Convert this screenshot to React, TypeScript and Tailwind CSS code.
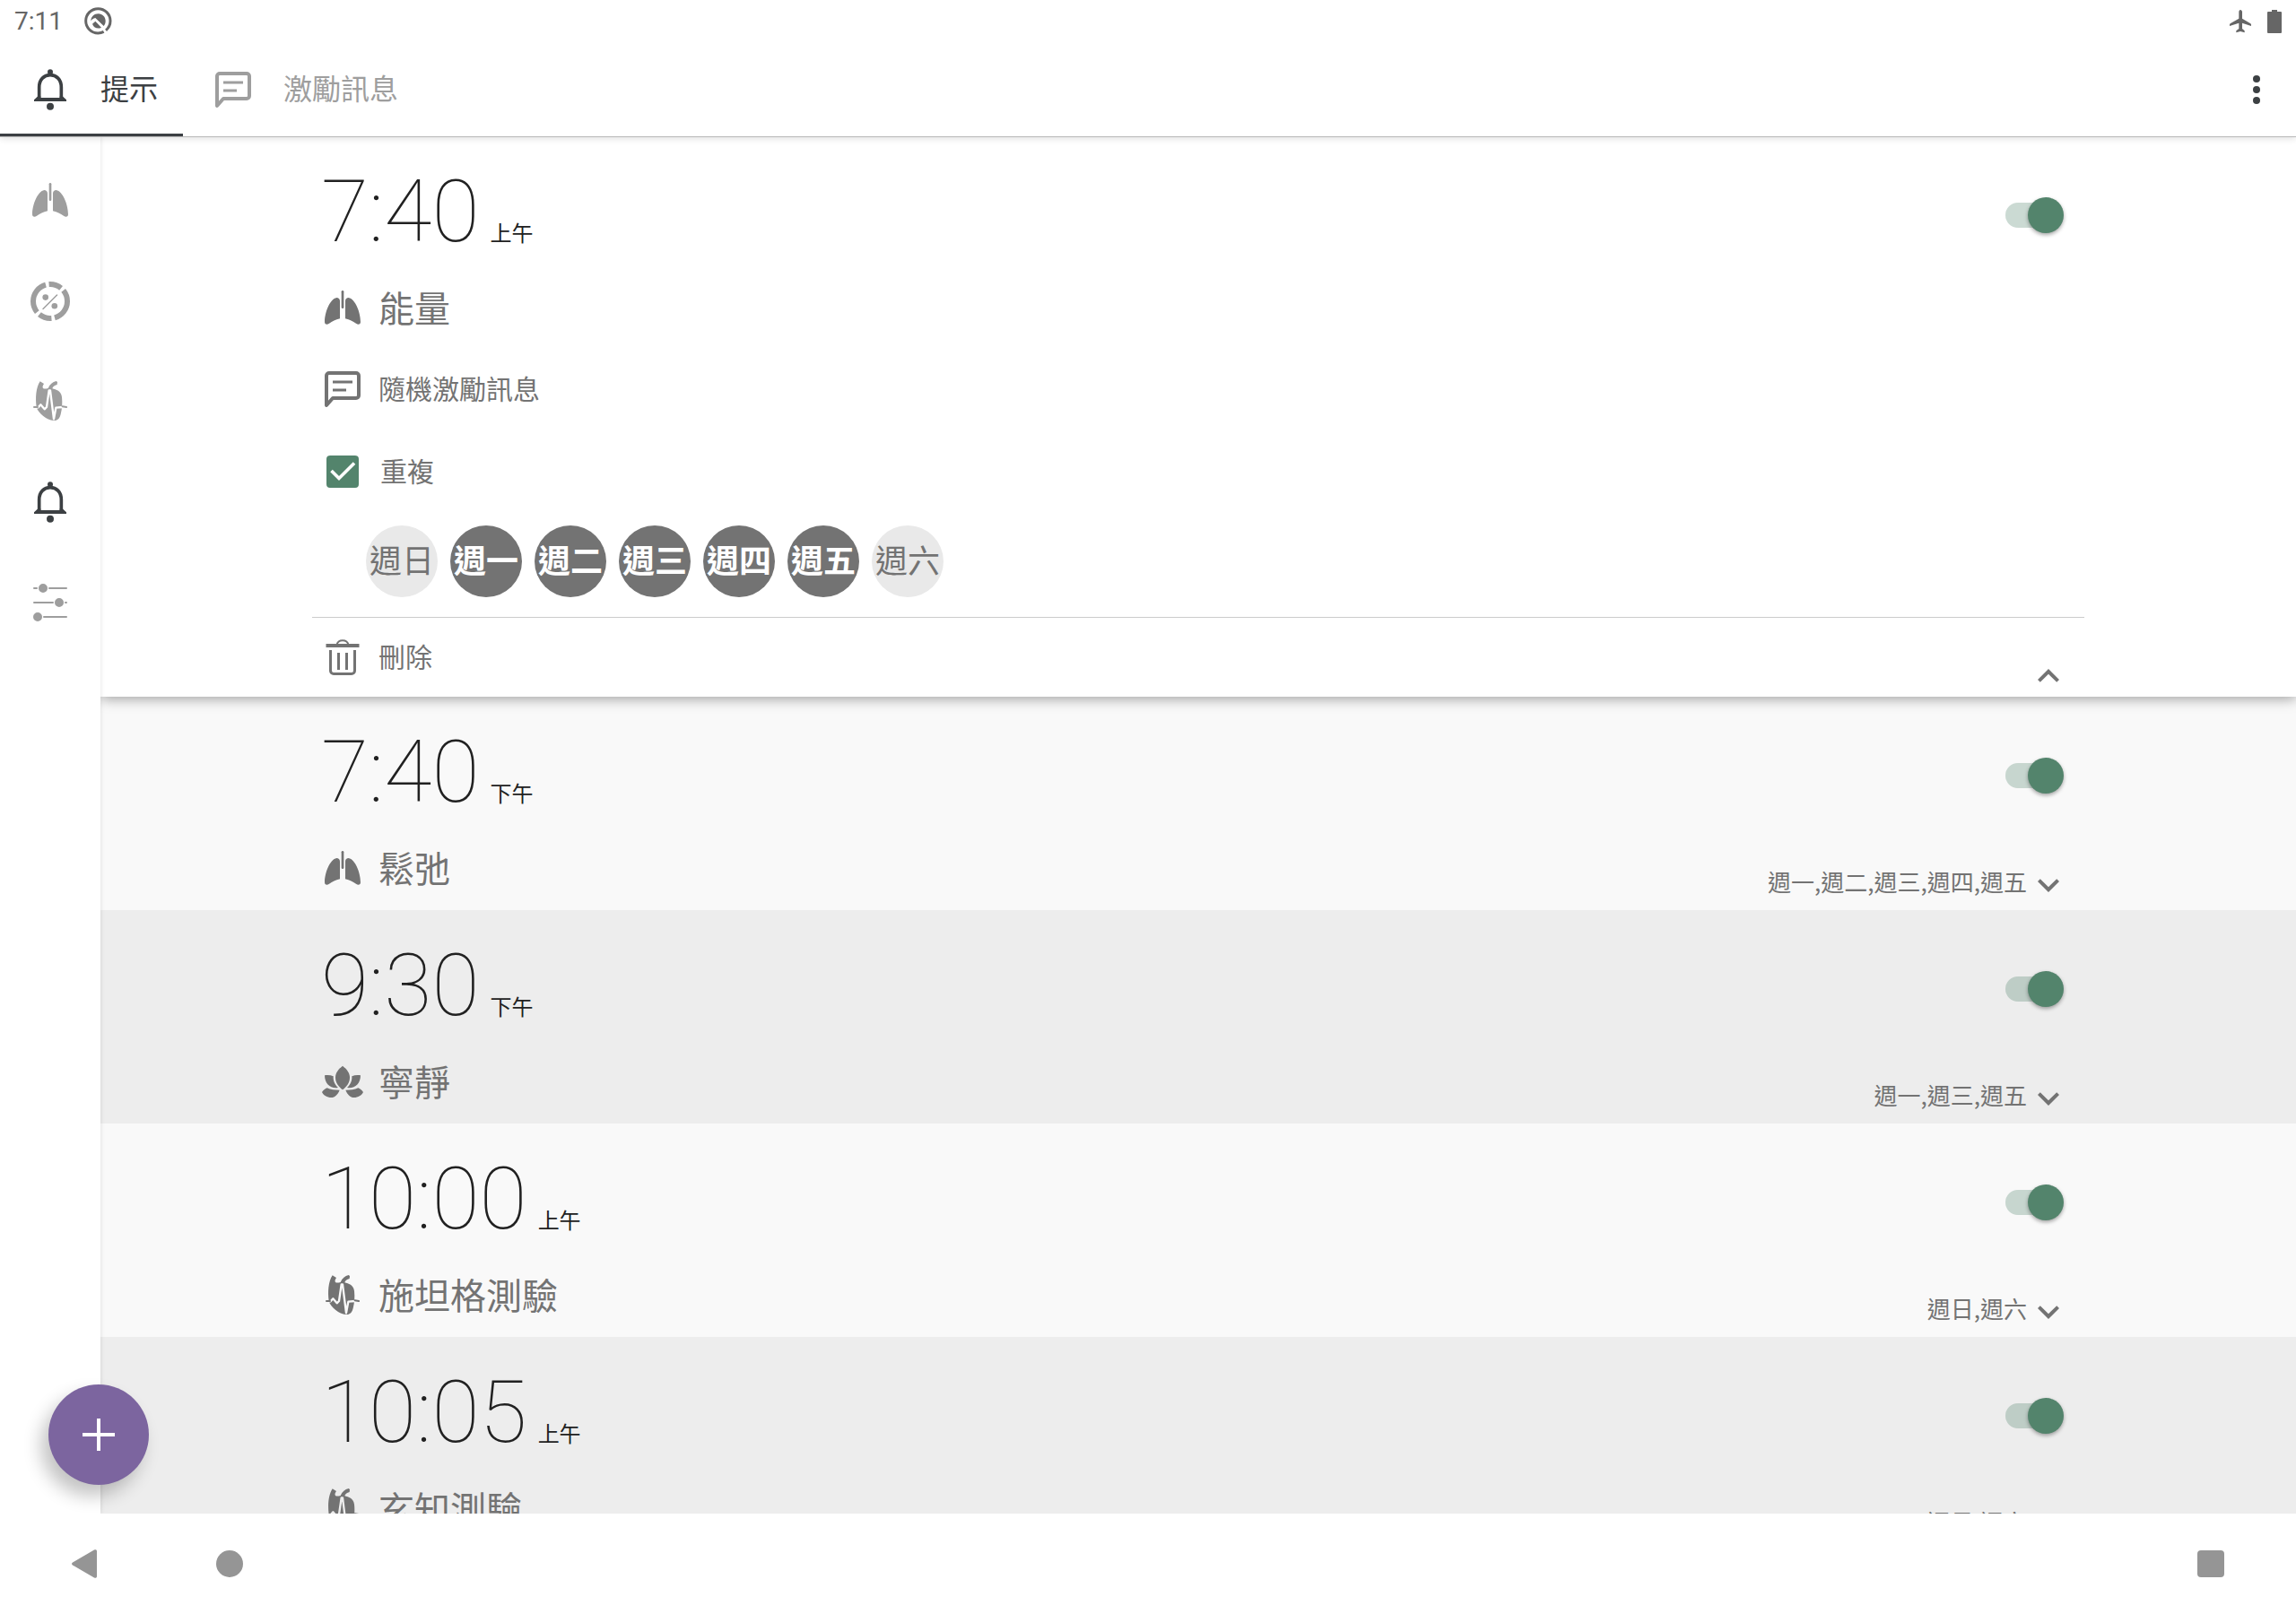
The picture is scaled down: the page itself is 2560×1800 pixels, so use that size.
import { useState } from "react";
import type { ReactNode } from "react";
import { clsx } from "clsx";

type IconName = "lungs" | "wheel" | "heart" | "bell" | "sliders" | "message" | "lotus" | "trash";

interface Reminder {
  id: number;
  time: string;
  period: string;
  icon: IconName;
  label: string;
  days: string[];
}

const WEEK = ["週日", "週一", "週二", "週三", "週四", "週五", "週六"];

const REMINDERS: Reminder[] = [
  { id: 1, time: "7:40", period: "上午", icon: "lungs", label: "能量", days: ["週一", "週二", "週三", "週四", "週五"] },
  { id: 2, time: "7:40", period: "下午", icon: "lungs", label: "鬆弛", days: ["週一", "週二", "週三", "週四", "週五"] },
  { id: 3, time: "9:30", period: "下午", icon: "lotus", label: "寧靜", days: ["週一", "週三", "週五"] },
  { id: 4, time: "10:00", period: "上午", icon: "heart", label: "施坦格測驗", days: ["週日", "週六"] },
  { id: 5, time: "10:05", period: "上午", icon: "heart", label: "玄知測驗", days: ["週日", "週六"] },
];

const NAV: { icon: IconName; label: string }[] = [
  { icon: "lungs", label: "呼吸" },
  { icon: "wheel", label: "進度" },
  { icon: "heart", label: "健康測驗" },
  { icon: "bell", label: "提示" },
  { icon: "sliders", label: "設定" },
];

const ICONS: Record<IconName, { box: number; body: ReactNode }> = {
  lungs: {
    box: 144,
    body: (
      <g fill="currentColor">
        <rect x="68" y="12" width="8" height="60" rx="4" />
        <path d="M52 36C58 36 63 40 63 47V106C48 109 38 115 27 122C20 127 12 126 12 117C12 85 30 40 52 36Z" />
        <path d="M92 36C86 36 81 40 81 47V106C96 109 106 115 117 122C124 127 132 126 132 117C132 85 114 40 92 36Z" />
      </g>
    ),
  },
  wheel: {
    box: 48,
    body: (
      <g fill="none" stroke="currentColor">
        <circle cx="24" cy="24" r="19" strokeWidth="6" pathLength="360" strokeDasharray="44 11 114 11" strokeDashoffset="-85.5" />
        <path d="M16 32.5L31.5 17" strokeWidth="1.5" strokeLinecap="round" />
        <circle cx="18.7" cy="19.6" r="3.3" fill="currentColor" stroke="none" />
        <circle cx="28.8" cy="29.2" r="3.3" fill="currentColor" stroke="none" />
      </g>
    ),
  },
  heart: {
    box: 144,
    body: (
      <>
        <mask id="pulse" maskUnits="userSpaceOnUse" x="0" y="0" width="144" height="144">
          <rect width="144" height="144" fill="#fff" />
          <path d="M20 92L32 91L40 82L53 97L60 90L68 34L72 34L84 130L91 92L114 90" fill="none" stroke="#000" strokeWidth="7" strokeLinejoin="round" />
        </mask>
        <path
          mask="url(#pulse)"
          fill="currentColor"
          d="M38 4L51 12C46 20 45 24 49 28C54 30 60 28 65 27C70 14 80 6 92 3L96 6L95 15C86 17 80 22 79 28C92 31 108 36 111 56C113 76 112 94 107 114C103 130 95 136 82 135C62 133 32 112 26 90C22 60 24 25 38 4Z"
        />
        <path d="M18 90H30M113 88L126 90" fill="none" stroke="currentColor" strokeWidth="6" strokeLinecap="round" />
      </>
    ),
  },
  bell: {
    box: 144,
    body: (
      <g fill="currentColor">
        <circle cx="72" cy="13" r="9" />
        <path d="M35 100V64C35 37 52 23 72 23C92 23 109 37 109 64V100" fill="none" stroke="currentColor" strokeWidth="11" />
        <path d="M18 106L31 94H40V99H104V94H113L126 106V111H18Z" />
        <circle cx="72" cy="128" r="12" />
      </g>
    ),
  },
  sliders: {
    box: 48,
    body: (
      <g fill="currentColor" stroke="currentColor" strokeWidth="2" strokeLinecap="round">
        <path d="M6 8H9M23 8H42M6 24H27M41 24H42M17 40H42" />
        <circle cx="16" cy="8" r="4" />
        <circle cx="34" cy="24" r="4" />
        <circle cx="10" cy="40" r="4" />
      </g>
    ),
  },
  message: {
    box: 24,
    body: (
      <g fill="none" stroke="currentColor">
        <path d="M3 21V4.5A1.5 1.5 0 0 1 4.5 3H19.5A1.5 1.5 0 0 1 21 4.5V15.5A1.5 1.5 0 0 1 19.5 17H6.5Z" strokeWidth="2" strokeLinejoin="round" />
        <path d="M6.5 8H17.5M6.5 12.5H14" strokeWidth="1.4" />
      </g>
    ),
  },
  lotus: {
    box: 144,
    body: (
      <g fill="currentColor">
        <path d="M72 17C86 28 96 40 96 56C96 74 84 88 72 97C60 88 48 74 48 56C48 40 58 28 72 17Z" />
        <path d="M12 49C22 47 32 48 41 52C40 68 46 80 57 90C32 94 12 78 12 49Z" />
        <path d="M132 49C122 47 112 48 103 52C104 68 98 80 87 90C112 94 132 78 132 49Z" />
        <path d="M3 105C8 98 14 93 20 91C32 97 46 98 62 98C56 113 46 123 34 123C20 123 8 116 3 105Z" />
        <path d="M141 105C136 98 130 93 124 91C112 97 98 98 82 98C88 113 98 123 110 123C124 123 136 116 141 105Z" />
      </g>
    ),
  },
  trash: {
    box: 48,
    body: (
      <g fill="none" stroke="currentColor">
        <path d="M5.5 11H42.5" strokeWidth="4" />
        <path d="M17.5 10C19 3.5 29 3.5 30.5 10" strokeWidth="2" />
        <path d="M10.5 16V39A3.5 3.5 0 0 0 14 42.5H34A3.5 3.5 0 0 0 37.5 39V16" strokeWidth="3" />
        <path d="M19.5 19V38M28.5 19V38" strokeWidth="3" />
      </g>
    ),
  },
};

function Icon({ name }: { name: IconName }) {
  const { box, body } = ICONS[name];
  return (
    <svg viewBox={`0 0 ${box} ${box}`} className="size-12 shrink-0" aria-hidden="true">
      {body}
    </svg>
  );
}

function Chevron({ up = false }: { up?: boolean }) {
  return (
    <svg viewBox="0 0 24 24" className="size-12" fill="currentColor" aria-hidden="true">
      <path d={up ? "M12 8.5l-6 6 1.41 1.41L12 11.33l4.59 4.58L18 14.5z" : "M16.59 8.59L12 13.17 7.41 8.59 6 10l6 6 6-6z"} />
    </svg>
  );
}

function StatusBar() {
  return (
    <div className="flex h-12 shrink-0 items-center justify-between px-4 text-[#666]">
      <div className="flex items-center gap-6">
        <span className="text-[28px] leading-8">7:11</span>
        <svg viewBox="0 0 96 96" className="size-8" aria-hidden="true">
          <circle cx="46" cy="46" r="41" fill="none" stroke="currentColor" strokeWidth="9" pathLength="360" strokeDasharray="348 12" strokeDashoffset="-62" />
          <g fill="currentColor">
            <path d="M22 46C22 32 33 22 47 22C61 22 71 33 71 46C71 53 69 59 65 63L37 36C30 37 25 41 22 46Z" />
            <path d="M27 56L37 47L57 68C46 74 32 70 27 56Z" />
          </g>
        </svg>
      </div>
      <div className="flex items-center gap-[18px]">
        <svg viewBox="0 0 72 78" className="h-[26px] w-6" fill="currentColor" aria-hidden="true">
          <path d="M36 0C39 0 42 3 42 7V29L70 46C72 48 73 50 72 54L42 44V63L50 70V76L36 72L22 76V70L31 63V44L0 54C-1 50 0 48 2 46L31 29V7C31 3 33 0 36 0Z" />
        </svg>
        <svg viewBox="0 0 16 26" className="h-[26px] w-4" fill="currentColor" aria-hidden="true">
          <path d="M5 0H11V2H15A1 1 0 0 1 16 3V25A1 1 0 0 1 15 26H1A1 1 0 0 1 0 25V3A1 1 0 0 1 1 2H5Z" />
        </svg>
      </div>
    </div>
  );
}

function Tab({ icon, active = false, children }: { icon: IconName; active?: boolean; children: ReactNode }) {
  return (
    <button
      role="tab"
      aria-selected={active}
      className={clsx(
        "flex items-center gap-8 pl-8 pr-7 text-[32px] leading-10",
        active ? "text-[#3c4043] shadow-[inset_0_-3px_0_#3c4043]" : "text-[#9e9e9e]"
      )}
    >
      <Icon name={icon} />
      {children}
    </button>
  );
}

function Header() {
  return (
    <header className="relative z-20 flex h-[152px] shrink-0 flex-col bg-white shadow-[0_1px_0_#b9b9b9,0_2px_8px_rgba(0,0,0,0.14)]">
      <StatusBar />
      <div className="flex grow justify-between">
        <div role="tablist" className="flex">
          <Tab icon="bell" active>
            提示
          </Tab>
          <Tab icon="message">激勵訊息</Tab>
        </div>
        <button aria-label="更多選項" className="px-5 text-[#3c4043]">
          <svg viewBox="0 0 48 48" className="size-12" fill="currentColor" aria-hidden="true">
            <circle cx="24" cy="12" r="4" />
            <circle cx="24" cy="24" r="4" />
            <circle cx="24" cy="36" r="4" />
          </svg>
        </button>
      </div>
    </header>
  );
}

function SideNav() {
  return (
    <nav className="z-10 flex w-28 shrink-0 flex-col bg-white pt-4 shadow-[0_0_5px_rgba(0,0,0,0.12)]">
      {NAV.map(({ icon, label }) => (
        <a
          key={icon}
          href={`#${icon}`}
          aria-label={label}
          className={clsx("flex h-28 items-center justify-center", icon === "bell" ? "text-[#3c4043]" : "text-[#9e9e9e]")}
        >
          <Icon name={icon} />
        </a>
      ))}
    </nav>
  );
}

function Switch({ label }: { label: string }) {
  return (
    <input
      type="checkbox"
      role="switch"
      defaultChecked
      aria-label={label}
      className="relative h-10 w-[65px] appearance-none before:absolute before:left-0 before:top-1.5 before:h-7 before:w-[58px] before:rounded-full before:bg-[#9e9e9e]/30 before:content-[''] after:absolute after:left-0 after:top-0 after:size-10 after:rounded-full after:bg-gray-100 after:shadow-[0_2px_4px_rgba(0,0,0,0.35)] after:content-[''] checked:before:bg-[#53846c]/30 checked:after:left-[25px] checked:after:bg-[#53846c]"
    />
  );
}

function DayPicker({ initial }: { initial: string[] }) {
  const [selected, setSelected] = useState(initial);

  const toggle = (day: string) =>
    setSelected((prev) => (prev.includes(day) ? prev.filter((d) => d !== day) : [...prev, day]));

  return (
    <div className="flex gap-3.5 pb-[22px] pl-[60px] pt-3.5">
      {WEEK.map((day) => {
        const on = selected.includes(day);
        return (
          <button
            key={day}
            aria-pressed={on}
            onClick={() => toggle(day)}
            className={clsx(
              "flex size-20 items-center justify-center rounded-full pt-0.5 text-4xl",
              on ? "bg-[#737373] font-bold text-white" : "bg-[#e9e9e9]"
            )}
          >
            {day}
          </button>
        );
      })}
    </div>
  );
}

function ReminderRow({ item, open, onToggle }: { item: Reminder; open: boolean; onToggle: () => void }) {
  return (
    <li
      className={clsx(
        "text-[#737373]",
        open ? "relative bg-white shadow-[0_2px_14px_rgba(0,0,0,0.38)]" : "min-h-[238px] odd:bg-[#ededed] even:bg-[#f9f9f9]"
      )}
    >
      <div className="mx-auto max-w-[1976px] pt-7">
        <div className="flex h-[120px] justify-between pl-2.5 pr-[23px] text-[#212121]">
          <div className="flex items-baseline gap-3">
            <span className="text-[97px] font-thin leading-[112px]">{item.time}</span>
            <span className="text-2xl">{item.period}</span>
          </div>
          <div className="flex items-center">
            <Switch label={`${item.time} ${item.period}`} />
          </div>
        </div>
        <div className="flex h-[88px] justify-between pl-2.5 pr-4">
          <div className="flex items-center gap-4 text-[40px]">
            <Icon name={item.icon} />
            <span className="pt-[3px]">{item.label}</span>
          </div>
          {!open && (
            <button
              onClick={onToggle}
              aria-expanded={false}
              className="flex items-end pb-0.5 font-['Noto_Sans_CJK_TC',sans-serif] text-[26px] leading-[56px]"
            >
              {item.days.join(",")}
              <Chevron />
            </button>
          )}
        </div>
        {open && (
          <>
            <button className="flex h-[92px] items-center gap-4 pl-2.5 text-[30px]">
              <Icon name="message" />
              隨機激勵訊息
            </button>
            <label className="flex h-[92px] items-center gap-[18px] pl-2.5 text-[30px]">
              <span className="relative flex size-12 items-center justify-center">
                <input
                  type="checkbox"
                  defaultChecked
                  className="peer size-9 appearance-none rounded border-4 border-[#737373] checked:border-[#53846c] checked:bg-[#53846c]"
                />
                <svg viewBox="0 0 48 48" className="pointer-events-none absolute inset-0 opacity-0 peer-checked:opacity-100" aria-hidden="true">
                  <path d="M11.5 23L20 31.5L37 14.5" fill="none" stroke="#fff" strokeWidth="3.6" />
                </svg>
              </span>
              重複
            </label>
            <DayPicker initial={item.days} />
            <div className="flex h-[89px] justify-between border-t border-[#ccc] pl-2.5 pr-4">
              <button className="flex items-center gap-4 text-[30px]">
                <Icon name="trash" />
                刪除
              </button>
              <button onClick={onToggle} aria-expanded aria-label="收合" className="self-end">
                <Chevron up />
              </button>
            </div>
          </>
        )}
      </div>
    </li>
  );
}

function SystemNav() {
  return (
    <div className="relative z-20 flex h-28 shrink-0 items-center justify-between bg-white px-20 text-[#959595]">
      <div className="flex items-center gap-[133px]">
        <button aria-label="返回">
          <svg viewBox="0 0 28 32" className="h-8 w-7" fill="currentColor" aria-hidden="true">
            <path d="M25 0.5C26.5-0.3 28 0.3 28 2V30C28 31.7 26.5 32.3 25 31.5L1 17.5C-0.3 16.7-0.3 15.3 1 14.5Z" />
          </svg>
        </button>
        <button aria-label="主畫面" className="size-[30px] rounded-full bg-[#959595]" />
      </div>
      <button aria-label="最近使用" className="size-[30px] rounded bg-[#959595]" />
    </div>
  );
}

export default function App() {
  const [openId, setOpenId] = useState<number | null>(1);

  return (
    <div className="flex h-screen flex-col overflow-hidden bg-white font-['Roboto','Noto_Sans_CJK_TC',sans-serif]">
      <Header />
      <div className="relative flex min-h-0 grow">
        <SideNav />
        <main className="grow overflow-y-auto [scrollbar-width:none]">
          <ul>
            {REMINDERS.map((item) => (
              <ReminderRow
                key={item.id}
                item={item}
                open={item.id === openId}
                onToggle={() => setOpenId(item.id === openId ? null : item.id)}
              />
            ))}
          </ul>
        </main>
        <button
          aria-label="新增提示"
          className="absolute bottom-8 left-[54px] z-20 flex size-28 items-center justify-center rounded-full bg-[#7c659f] shadow-[-8px_12px_20px_rgba(0,0,0,0.24)]"
        >
          <svg viewBox="0 0 36 36" className="size-9" stroke="#fff" strokeWidth="4" aria-hidden="true">
            <path d="M18 0V36M0 18H36" />
          </svg>
        </button>
      </div>
      <SystemNav />
    </div>
  );
}
